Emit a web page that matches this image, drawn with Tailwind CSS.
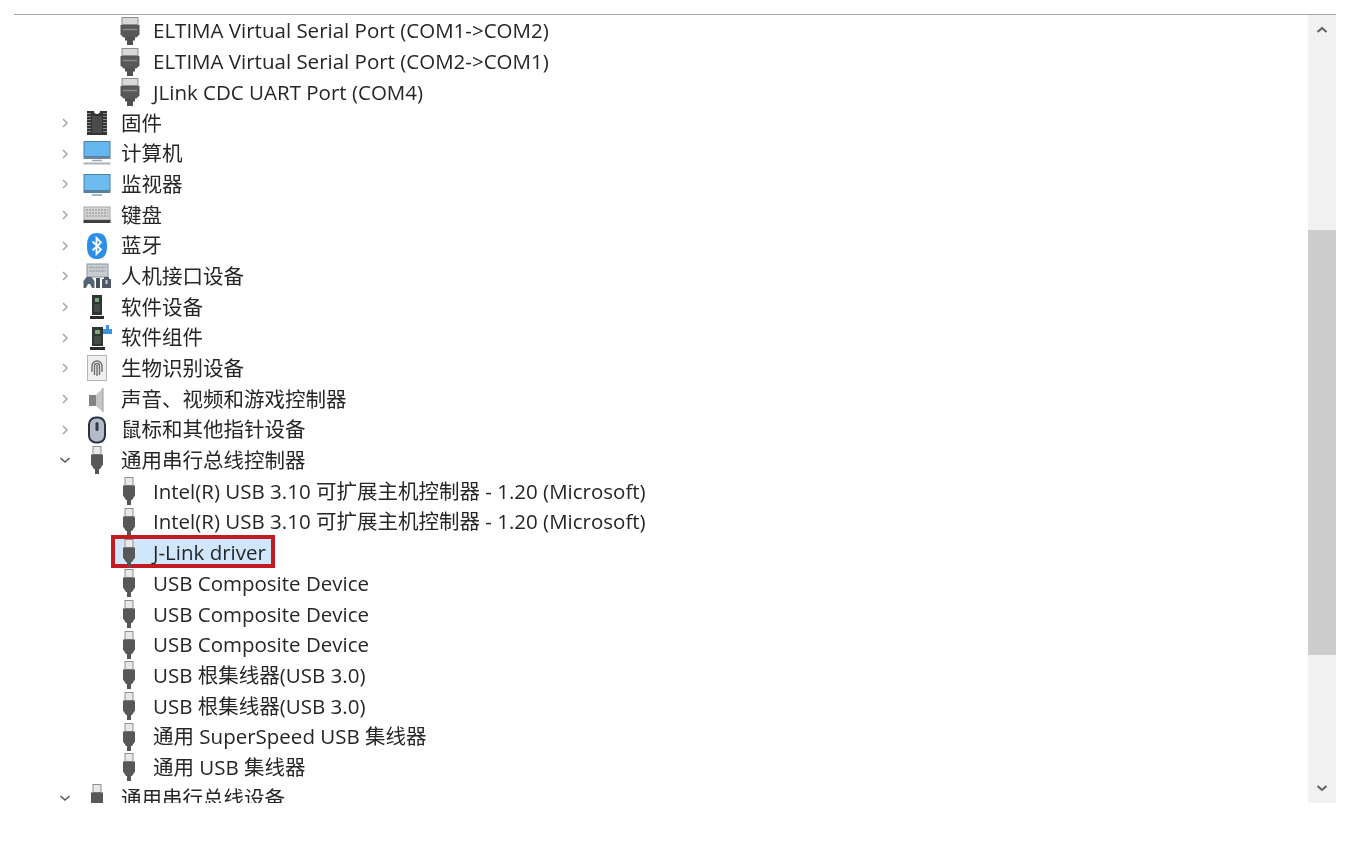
<!DOCTYPE html>
<html lang="zh-CN">
<head>
<meta charset="utf-8">
<script src="https://cdn.jsdelivr.net/npm/@tailwindcss/browser@4"></script>
</head>
<body class="bg-white">
<svg width="0" height="0" class="absolute">
  <defs>
    <symbol id="usb" viewBox="0 0 16 30">
      <rect x="4" y="1.500" width="8" height="8" fill="#e8e8e8" stroke="#8f8f8f" stroke-width="1"/>
      <path d="M2 9.500h12v10l-3 4.500H5l-3-4.500z" fill="#585858"/>
      <path d="M6 23h4v6H6z" fill="#555"/>
    </symbol>
    <symbol id="port" viewBox="0 0 22 30">
      <rect x="3" y="1.500" width="16" height="7" fill="#d9d9d9" stroke="#8e8e8e" stroke-width="1"/>
      <path d="M1.500 9h19v9.500l-3 3h-13l-3-3z" fill="#585858"/>
      <path d="M4 13.500h14" stroke="#8a8a8a" stroke-width="1.500"/>
      <path d="M6 21h10v3.500h-2V29H8v-4.500H6z" fill="#505050"/>
    </symbol>
    <symbol id="right" viewBox="0 0 12 12"><path d="M4 2l4 4-4 4" fill="none" stroke="#a6a6a6" stroke-width="1.500"/></symbol>
    <symbol id="down" viewBox="0 0 12 12"><path d="M1.500 4l4.500 4 4.500-4" fill="none" stroke="#555" stroke-width="1.500"/></symbol>
  </defs>
</svg>

<main class="ml-[14px] mt-[14px] w-[1322px] h-[789px] border-t border-[#a8a8a8] flex overflow-hidden text-[#262626] text-[20.500px] font-['Open_Sans','Noto_Sans_CJK_SC',sans-serif] blur-[0.5px]">
  <div class="flex-1 min-w-0 overflow-hidden pt-[0.500px]">

    <div class="h-[30.700px] flex items-center pl-[105px] gap-3"><svg class="w-[22px] h-[30px] shrink-0"><use href="#port"/></svg><span>ELTIMA Virtual Serial Port (COM1-&gt;COM2)</span></div>
    <div class="h-[30.700px] flex items-center pl-[105px] gap-3"><svg class="w-[22px] h-[30px] shrink-0"><use href="#port"/></svg><span>ELTIMA Virtual Serial Port (COM2-&gt;COM1)</span></div>
    <div class="h-[30.700px] flex items-center pl-[105px] gap-3"><svg class="w-[22px] h-[30px] shrink-0"><use href="#port"/></svg><span>JLink CDC UART Port (COM4)</span></div>

    <div class="h-[30.700px] flex items-center pl-[45px]">
      <svg class="w-3 h-3 shrink-0 mr-[10px]"><use href="#right"/></svg>
      <div class="w-[32px] mr-2 flex items-center justify-center">
        <svg class="w-[22px] h-[26px]" viewBox="0 0 22 26"><path d="M1 1h7a3 3 0 0 0 6 0h7v24H1z" fill="#333"/><path d="M1 3.500h20M1 6.500h20M1 9.500h20M1 12.500h20M1 15.500h20M1 18.500h20M1 21.500h20" stroke="#8a8a8a" stroke-width="1" stroke-dasharray="4 12"/><rect x="6" y="6" width="10" height="17" fill="#4b4b4b"/></svg>
      </div>
      <span>固件</span>
    </div>
    <div class="h-[30.700px] flex items-center pl-[45px]">
      <svg class="w-3 h-3 shrink-0 mr-[10px]"><use href="#right"/></svg>
      <div class="w-[32px] mr-2 flex items-center justify-center">
        <svg class="w-[30px] h-[27px]" viewBox="0 0 30 27"><rect x="2" y="1.500" width="26" height="15" fill="#66b7ee" stroke="#4f7fa6"/><rect x="1.500" y="17" width="27" height="2" fill="#6f8698"/><path d="M10 20.500h10" stroke="#9ab" stroke-width="1.500"/><path d="M1.500 23.500h27" stroke="#a8b2bc" stroke-width="2"/></svg>
      </div>
      <span>计算机</span>
    </div>
    <div class="h-[30.700px] flex items-center pl-[45px]">
      <svg class="w-3 h-3 shrink-0 mr-[10px]"><use href="#right"/></svg>
      <div class="w-[32px] mr-2 flex items-center justify-center">
        <svg class="w-[30px] h-[27px]" viewBox="0 0 30 27"><rect x="2" y="3.500" width="26" height="16" fill="#6cbcf0" stroke="#4f7fa6"/><rect x="1.500" y="20" width="27" height="2" fill="#5f7f98"/><path d="M10 24h10" stroke="#7aa0bf" stroke-width="1.500"/></svg>
      </div>
      <span>监视器</span>
    </div>
    <div class="h-[30.700px] flex items-center pl-[45px]">
      <svg class="w-3 h-3 shrink-0 mr-[10px]"><use href="#right"/></svg>
      <div class="w-[32px] mr-2 flex items-center justify-center">
        <svg class="w-[30px] h-[20px]" viewBox="0 0 30 20"><rect x="2" y="2" width="26" height="13" fill="#d4d4d4" stroke="#a5a5a5"/><path d="M4 5h22M4 8h22M4 11h22" stroke="#a3a3a3" stroke-width="1.500" stroke-dasharray="2 1"/><rect x="1.500" y="15" width="27" height="3" fill="#404040"/></svg>
      </div>
      <span>键盘</span>
    </div>
    <div class="h-[30.700px] flex items-center pl-[45px]">
      <svg class="w-3 h-3 shrink-0 mr-[10px]"><use href="#right"/></svg>
      <div class="w-[32px] mr-2 flex items-center justify-center">
        <svg class="w-[22px] h-[28px]" viewBox="0 0 22 28"><path d="M11 1c7 0 10 4 10 13s-3 13-10 13S1 23 1 14 4 1 11 1z" fill="#2d8ee6"/><path d="M6.500 9.500l8.500 8-4.500 4.500V6l4.500 4.500-8.500 8" fill="none" stroke="#fff" stroke-width="1.800"/></svg>
      </div>
      <span>蓝牙</span>
    </div>
    <div class="h-[30.700px] flex items-center pl-[45px]">
      <svg class="w-3 h-3 shrink-0 mr-[10px]"><use href="#right"/></svg>
      <div class="w-[32px] mr-2 flex items-center justify-center">
        <svg class="w-[30px] h-[26px]" viewBox="0 0 30 26"><rect x="5" y="1" width="21" height="13" fill="#c9cdd2" stroke="#8e959c"/><path d="M7.500 4.500h16M7.500 8h16" stroke="#9aa0a6" stroke-width="1.500" stroke-dasharray="2 1"/><path d="M1.500 25v-7l3-4h5l3 4v7h-2.500l-2-4H6l-2 4z" fill="#566372"/><path d="M14 25v-10h4v10z" fill="#454f5a"/><path d="M20 25v-9h2v-2h5v2h2v9z" fill="#4f5a66"/><rect x="23.500" y="17" width="2" height="4" fill="#ccd"/></svg>
      </div>
      <span>人机接口设备</span>
    </div>
    <div class="h-[30.700px] flex items-center pl-[45px]">
      <svg class="w-3 h-3 shrink-0 mr-[10px]"><use href="#right"/></svg>
      <div class="w-[32px] mr-2 flex items-center justify-center">
        <svg class="w-[16px] h-[26px]" viewBox="0 0 16 26"><rect x="3" y="1" width="10" height="20" fill="#2f362f"/><rect x="6" y="4" width="4" height="4" fill="#7da77d"/><rect x="5" y="10" width="6" height="8" fill="#454b45"/><rect x="1" y="22" width="14" height="3" fill="#2a2a2a"/></svg>
      </div>
      <span>软件设备</span>
    </div>
    <div class="h-[30.700px] flex items-center pl-[45px]">
      <svg class="w-3 h-3 shrink-0 mr-[10px]"><use href="#right"/></svg>
      <div class="w-[32px] mr-2 flex items-center justify-center">
        <svg class="w-[24px] h-[28px] ml-2" viewBox="0 0 24 28"><rect x="3" y="3" width="11" height="19" fill="#2f362f"/><rect x="6" y="6" width="5" height="4" fill="#7da77d"/><rect x="5" y="12" width="7" height="8" fill="#454b45"/><rect x="1" y="23" width="15" height="3" fill="#2a2a2a"/><path d="M14 5h3V1h3v4h3v5h-9z" fill="#3d93dc"/></svg>
      </div>
      <span>软件组件</span>
    </div>
    <div class="h-[30.700px] flex items-center pl-[45px]">
      <svg class="w-3 h-3 shrink-0 mr-[10px]"><use href="#right"/></svg>
      <div class="w-[32px] mr-2 flex items-center justify-center">
        <svg class="w-[24px] h-[28px]" viewBox="0 0 24 28"><rect x="2.500" y="1.500" width="19" height="25" fill="#efefef" stroke="#b5b5b5"/><path d="M7 18v-6a5 5 0 0 1 10 0v6M9.500 21v-9a2.500 2.500 0 0 1 5 0v9M12 11v11" fill="none" stroke="#6f6f6f" stroke-width="1.400"/></svg>
      </div>
      <span>生物识别设备</span>
    </div>
    <div class="h-[30.700px] flex items-center pl-[45px]">
      <svg class="w-3 h-3 shrink-0 mr-[10px]"><use href="#right"/></svg>
      <div class="w-[32px] mr-2 flex items-center justify-center">
        <svg class="w-[24px] h-[28px]" viewBox="0 0 24 28"><rect x="4" y="10" width="7" height="11" fill="#838383"/><path d="M11 10l7-7v24l-7-6z" fill="#c6c6c6"/><path d="M18 3v24" stroke="#9c9c9c"/></svg>
      </div>
      <span>声音、视频和游戏控制器</span>
    </div>
    <div class="h-[30.700px] flex items-center pl-[45px]">
      <svg class="w-3 h-3 shrink-0 mr-[10px]"><use href="#right"/></svg>
      <div class="w-[32px] mr-2 flex items-center justify-center">
        <svg class="w-[24px] h-[28px]" viewBox="0 0 24 28"><rect x="4" y="1.500" width="16" height="25" rx="7" fill="#b4bbc7" stroke="#283344" stroke-width="2"/><rect x="10.500" y="6" width="3" height="9" rx="1.500" fill="#333b4b"/></svg>
      </div>
      <span>鼠标和其他指针设备</span>
    </div>
    <div class="h-[30.700px] flex items-center pl-[45px]">
      <svg class="w-3 h-3 shrink-0 mr-[10px]"><use href="#down"/></svg>
      <div class="w-[32px] mr-2 flex items-center justify-center">
        <svg class="w-[16px] h-[30px]"><use href="#usb"/></svg>
      </div>
      <span>通用串行总线控制器</span>
    </div>

    <div class="h-[30.700px] flex items-center pl-[107px] gap-4"><svg class="w-[16px] h-[30px] shrink-0"><use href="#usb"/></svg><span>Intel(R) USB 3.10 可扩展主机控制器 - 1.20 (Microsoft)</span></div>
    <div class="h-[30.700px] flex items-center pl-[107px] gap-4"><svg class="w-[16px] h-[30px] shrink-0"><use href="#usb"/></svg><span>Intel(R) USB 3.10 可扩展主机控制器 - 1.20 (Microsoft)</span></div>

    <div class="relative h-[30.700px] flex items-center pl-[107px] gap-4">
      <div class="absolute left-[97px] top-[-2px] w-[164px] h-[33px] border-4 border-[#c01c22] bg-[#cfe6fb]"></div>
      <svg class="relative w-[16px] h-[30px] shrink-0"><use href="#usb"/></svg><span class="relative">J-Link driver</span>
    </div>

    <div class="h-[30.700px] flex items-center pl-[107px] gap-4"><svg class="w-[16px] h-[30px] shrink-0"><use href="#usb"/></svg><span>USB Composite Device</span></div>
    <div class="h-[30.700px] flex items-center pl-[107px] gap-4"><svg class="w-[16px] h-[30px] shrink-0"><use href="#usb"/></svg><span>USB Composite Device</span></div>
    <div class="h-[30.700px] flex items-center pl-[107px] gap-4"><svg class="w-[16px] h-[30px] shrink-0"><use href="#usb"/></svg><span>USB Composite Device</span></div>
    <div class="h-[30.700px] flex items-center pl-[107px] gap-4"><svg class="w-[16px] h-[30px] shrink-0"><use href="#usb"/></svg><span>USB 根集线器(USB 3.0)</span></div>
    <div class="h-[30.700px] flex items-center pl-[107px] gap-4"><svg class="w-[16px] h-[30px] shrink-0"><use href="#usb"/></svg><span>USB 根集线器(USB 3.0)</span></div>
    <div class="h-[30.700px] flex items-center pl-[107px] gap-4"><svg class="w-[16px] h-[30px] shrink-0"><use href="#usb"/></svg><span>通用 SuperSpeed USB 集线器</span></div>
    <div class="h-[30.700px] flex items-center pl-[107px] gap-4"><svg class="w-[16px] h-[30px] shrink-0"><use href="#usb"/></svg><span>通用 USB 集线器</span></div>

    <div class="h-[30.700px] flex items-center pl-[45px]">
      <svg class="w-3 h-3 shrink-0 mr-[10px]"><use href="#down"/></svg>
      <div class="w-[32px] mr-2 flex items-center justify-center">
        <svg class="w-[16px] h-[30px]"><use href="#usb"/></svg>
      </div>
      <span>通用串行总线设备</span>
    </div>
  </div>

  <aside class="w-[28px] shrink-0 bg-[#f1f1f1] flex flex-col">
    <div class="h-[30px] flex items-center justify-center"><svg class="w-3 h-3" viewBox="0 0 12 12"><path d="M1.500 8l4.500-4 4.500 4" fill="none" stroke="#606060" stroke-width="2"/></svg></div>
    <div class="h-[185px]"></div>
    <div class="h-[425px] bg-[#cdcdcd]"></div>
    <div class="flex-1"></div>
    <div class="h-[30px] flex items-center justify-center"><svg class="w-3 h-3" viewBox="0 0 12 12"><path d="M1.500 4l4.500 4 4.500-4" fill="none" stroke="#606060" stroke-width="2"/></svg></div>
  </aside>
</main>
</body>
</html>
